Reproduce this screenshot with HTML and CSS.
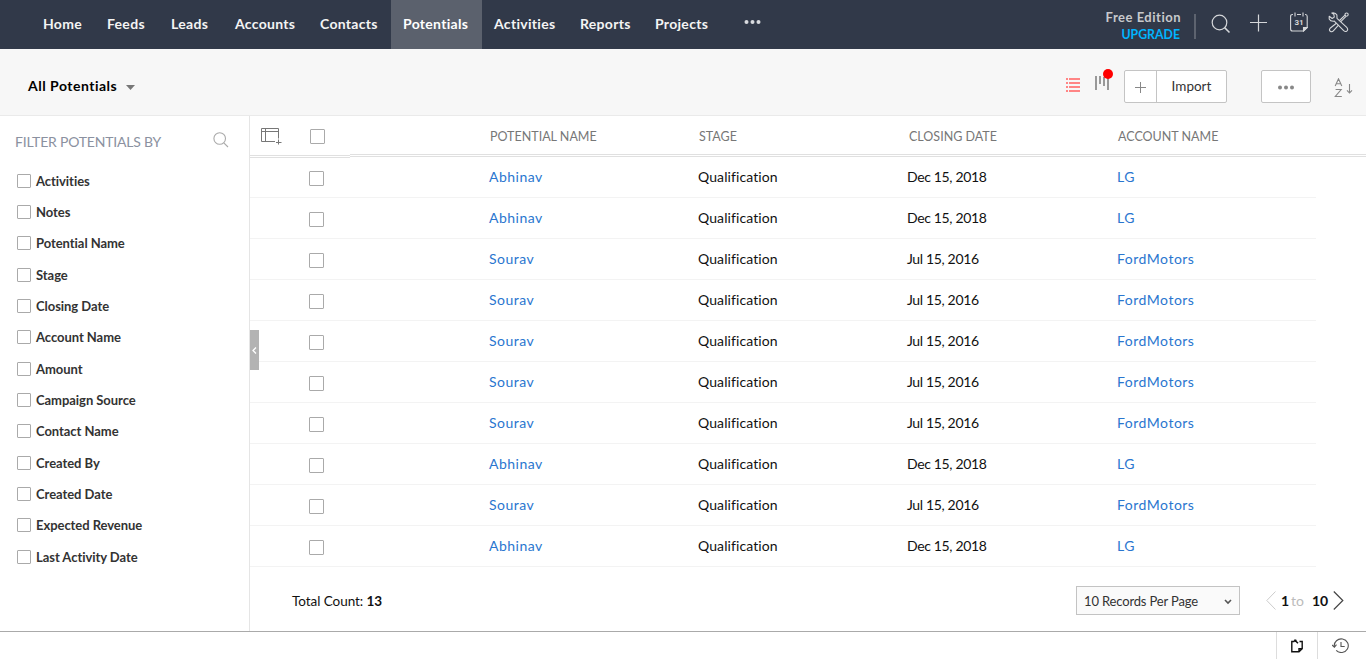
FILE: index.html
```html
<!DOCTYPE html>
<html lang="en">
<head>
<meta charset="utf-8">
<title>All Potentials</title>
<link rel="stylesheet" href="styles.css">
</head>
<body>
<header class="topbar">
  <nav class="nav">
    <a>Home</a><a>Feeds</a><a>Leads</a><a>Accounts</a><a>Contacts</a><a class="active">Potentials</a><a>Activities</a><a>Reports</a><a>Projects</a>
    <a class="more"><svg width="18" height="6"><g fill="#d9dbdf"><circle cx="3.5" cy="3" r="2"/><circle cx="9.5" cy="3" r="2"/><circle cx="15.5" cy="3" r="2"/></g></svg></a>
  </nav>
  <div class="edition"><span class="free">Free Edition</span><span class="upgrade">UPGRADE</span></div>
  <div class="tools">
    <svg width="20" height="20" fill="none" stroke="#d5d7da" stroke-width="1.2"><circle cx="8.5" cy="8.5" r="7.3"/><path d="M13.6 13.6L18.5 18.5" stroke-width="1.5"/></svg>
    <svg width="18" height="18" stroke="#d5d7da" stroke-width="1.2"><path d="M8.5 0.5V17.5M0 8.5H17"/></svg>
    <svg width="18" height="20" fill="none" stroke="#d5d7da" stroke-width="1.1"><path d="M3 2.5H2.5Q.6 2.5 .6 4.5V17Q.6 19 2.5 19H13.5L17.2 15.5V4.5Q17.2 2.5 15.5 2.5H15M7 2.5H11M5 .5V4.5M13 .5V4.5"/><path d="M13.5 19V15.5H17.2Z" fill="#d5d7da"/><text x="9" y="13" text-anchor="middle" class="cal">31</text></svg>
    <svg width="22" height="21" fill="none" stroke="#d5d7da" stroke-width="1.1" stroke-linejoin="round"><path d="M1.2 4.3L4.2 6.5L6.3 5.1L5.8 2.2L3.8 1Q7.5.3 8.9 3.1L9 6.3L19 15.7Q20.5 18 18.6 19.2Q17.2 19.9 15.7 18.6L6.3 9.1Q2.5 9.6 1.2 6.9Z"/><path d="M11.5 8.5L17 3.2M12.8 9.6L18 4.3M8.4 11.2L2.1 16.3Q.7 18 2.3 19.3Q4 20.4 5.3 18.9L10.5 13.2"/><circle cx="18.6" cy="2.6" r="1.6"/></svg>
  </div>
</header>

<section class="toolbar">
  <div class="view">All Potentials<svg width="9" height="5"><path d="M0 0H9L4.5 5Z" fill="#777"/></svg></div>
  <div class="actions">
    <svg class="list" width="14" height="14" stroke="#ff8585" stroke-width="2"><path d="M0 1H2M3 1H14M0 5H2M3 5H14M0 9H2M3 9H14M0 13H2M3 13H14"/></svg>
    <svg class="kanban" width="20" height="23"><path d="M2 7V21M6 7V15M10 8V17M14 8V21" stroke="#999" stroke-width="2"/><circle cx="14" cy="5" r="5" fill="#f00"/></svg>
    <div class="split"><span class="plus"><svg width="11" height="11" stroke="#888"><path d="M5.5 0V11M0 5.5H11"/></svg></span><span class="import">Import</span></div>
    <div class="dots"><svg width="16" height="5" fill="#888"><circle cx="2" cy="2.5" r="2"/><circle cx="8" cy="2.5" r="2"/><circle cx="14" cy="2.5" r="2"/></svg></div>
    <svg class="sort" width="20" height="20" fill="none" stroke="#888" stroke-width="1.1"><path d="M1.2 8L4.5 .8L7.8 8M2.3 5.8H6.7M1.6 11.5H7.2L1.3 18.5H7.8M15.5 6V15M13 12.3L15.5 15L18 12.3"/></svg>
  </div>
</section>

<main class="main">
  <aside class="filters">
    <div class="filter-title"><span>FILTER POTENTIALS BY</span><svg width="16" height="16" fill="none" stroke="#aaa" stroke-width="1.1"><circle cx="6.7" cy="6.5" r="5.8"/><path d="M10.8 10.8L15 15"/></svg></div>
    <ul class="filter-list">
      <li><i class="box"></i><span>Activities</span></li>
      <li><i class="box"></i><span>Notes</span></li>
      <li><i class="box"></i><span>Potential Name</span></li>
      <li><i class="box"></i><span>Stage</span></li>
      <li><i class="box"></i><span>Closing Date</span></li>
      <li><i class="box"></i><span>Account Name</span></li>
      <li><i class="box"></i><span>Amount</span></li>
      <li><i class="box"></i><span>Campaign Source</span></li>
      <li><i class="box"></i><span>Contact Name</span></li>
      <li><i class="box"></i><span>Created By</span></li>
      <li><i class="box"></i><span>Created Date</span></li>
      <li><i class="box"></i><span>Expected Revenue</span></li>
      <li><i class="box"></i><span>Last Activity Date</span></li>
    </ul>
  </aside>
  <section class="records">
    <div class="collapse"><svg width="5" height="7" fill="none" stroke="#fff" stroke-width="1.3"><path d="M4 .5L1 3.5L4 6.5"/></svg></div>
    <div class="head">
      <svg class="columns" width="21" height="17" fill="none" stroke="#777"><path d="M14 13.5H.5V.5H17.5V10.5M.5 3.5H17.5M4.5 .5V13.5M17.5 11.5V16.5M15 14.5H20.5"/></svg>
      <i class="box"></i><span>POTENTIAL NAME</span><span>STAGE</span><span>CLOSING DATE</span><span>ACCOUNT NAME</span>
    </div>
    <div class="rows">
      <div class="row"><i class="box"></i><a>Abhinav</a><span class="stage">Qualification</span><span class="date">Dec 15, 2018</span><a>LG</a></div>
      <div class="row"><i class="box"></i><a>Abhinav</a><span class="stage">Qualification</span><span class="date">Dec 15, 2018</span><a>LG</a></div>
      <div class="row"><i class="box"></i><a>Sourav</a><span class="stage">Qualification</span><span class="date">Jul 15, 2016</span><a>FordMotors</a></div>
      <div class="row"><i class="box"></i><a>Sourav</a><span class="stage">Qualification</span><span class="date">Jul 15, 2016</span><a>FordMotors</a></div>
      <div class="row"><i class="box"></i><a>Sourav</a><span class="stage">Qualification</span><span class="date">Jul 15, 2016</span><a>FordMotors</a></div>
      <div class="row"><i class="box"></i><a>Sourav</a><span class="stage">Qualification</span><span class="date">Jul 15, 2016</span><a>FordMotors</a></div>
      <div class="row"><i class="box"></i><a>Sourav</a><span class="stage">Qualification</span><span class="date">Jul 15, 2016</span><a>FordMotors</a></div>
      <div class="row"><i class="box"></i><a>Abhinav</a><span class="stage">Qualification</span><span class="date">Dec 15, 2018</span><a>LG</a></div>
      <div class="row"><i class="box"></i><a>Sourav</a><span class="stage">Qualification</span><span class="date">Jul 15, 2016</span><a>FordMotors</a></div>
      <div class="row"><i class="box"></i><a>Abhinav</a><span class="stage">Qualification</span><span class="date">Dec 15, 2018</span><a>LG</a></div>
    </div>
    <div class="pager">
      <div class="total">Total Count: <b>13</b></div>
      <div class="select"><span>10 Records Per Page</span><svg width="8" height="6" fill="none" stroke="#555" stroke-width="1.6"><path d="M1 1L4 4L7 1"/></svg></div>
      <div class="range">
        <svg width="10" height="19" fill="none" stroke="#ccc"><path d="M9.5 .5L.8 9.5L9.5 18.5"/></svg>
        <b class="from">1</b><span class="to">to</span><b class="until">10</b>
        <svg width="11" height="19" fill="none" stroke="#444" stroke-width="1.2"><path d="M.8 .5L9.8 9.5L.8 18.5"/></svg>
      </div>
    </div>
  </section>
</main>

<footer class="bottom">
  <div class="note"><svg width="12" height="14" fill="none" stroke="#111" stroke-width="1.4"><path d="M3 2.5H.8V12.8H8L11.2 9.8V2.5H8.5M8 12.8V9.8H11.2"/><path d="M3.3 .7L7 4.3M3.2 2.6L5.4 .8" stroke-width="1.6"/></svg></div>
  <div class="history"><svg width="17" height="15" fill="none" stroke="#555" stroke-width="1.1"><path d="M2.3 8.5A7 6.8 0 1 1 4.2 12.4M0 7L2.4 9.2L4.5 6.7M9 4V8.5H12.7"/></svg></div>
</footer>
</body>
</html>
```
FILE: styles.css
```css
* { box-sizing: border-box; }
body { margin: 0; width: 1366px; height: 659px; overflow: hidden; display: flex; flex-direction: column; background: #fff; color: #111; font: 14px/20px Lato, "Open Sans", sans-serif; font-variant-ligatures: none; }
svg { display: block; flex: none; }
ul { list-style: none; margin: 0; padding: 0; }
.box { display: block; flex: none; border: 1px solid #aaa; border-radius: 1px; background: #fff; }

.topbar { height: 49px; flex: none; background: #313949; display: flex; padding-left: 31px; }
.nav { display: grid; grid-template-columns: 64px 64px 64px 85px 83px 91px 86px 75px 78px 62px; color: #f4f4f4; font-weight: 700; letter-spacing: .3px; }
.nav a { display: flex; padding: 14px 0 0 12px; white-space: nowrap; }
.nav .active { background: #5b616d; color: #fff; }
.nav .more { padding: 19px 0 0 22px; }
.edition { margin-left: auto; width: 91px; margin-top: 8px; padding-right: 13px; display: flex; flex-direction: column; align-items: flex-end; line-height: 18px; font-size: 13px; font-weight: 700; white-space: nowrap; }
.free { color: #c8c9cc; letter-spacing: .5px; }
.upgrade { color: #00b4ff; font-size: 12.3px; padding-right: 1px; }
.tools { width: 172px; height: 25px; margin-top: 14px; border-left: 2px solid #5d636f; display: grid; grid-template-columns: 39px 40px 38px 22px; padding-left: 15px; }
.tools svg:nth-child(3), .tools svg:nth-child(4) { margin-top: -2px; }
.cal { font: 700 8px Roboto, sans-serif; fill: #d5d7da; stroke: none; }

.toolbar { height: 67px; flex: none; background: #f7f7f7; border-bottom: 1px solid #eaeaea; display: flex; justify-content: space-between; padding-top: 21px; }
.view { margin-left: 18px; height: 32px; padding-left: 10px; display: flex; align-items: center; gap: 9px; color: #000; font-weight: 700; letter-spacing: .5px; }
.view svg { margin-top: 2px; }
.actions { display: flex; width: 301px; }
.list { margin: 8px 14px 0 1px; }
.kanban { margin: -1px 10px 0 0; }
.split { width: 103px; height: 33px; display: flex; border: 1px solid #c4c4c4; border-radius: 2px; background: #fff; margin-right: 34px; }
.plus { width: 32px; border-right: 1px solid #c4c4c4; display: grid; place-items: center; padding-top: 1px; }
.import { flex: 1; text-align: center; line-height: 30px; font-size: 13.5px; color: #333; }
.dots { width: 50px; height: 33px; border: 1px solid #c4c4c4; border-radius: 2px; background: #fff; display: grid; place-items: center; padding-top: 2px; }
.sort { margin: 8px 0 0 23px; }

.main { flex: 1; min-height: 0; display: flex; }
.filters { width: 250px; border-right: 1px solid #e5e5e5; }
.filter-title { height: 49px; display: flex; justify-content: space-between; padding: 16px 20px 0 15px; color: #8b91a0; letter-spacing: -.2px; }
.filter-list { display: grid; grid-auto-rows: 31.33px; padding-left: 17px; color: #333; font-size: 13px; font-weight: 700; letter-spacing: -.05px; }
.filter-list li { display: flex; align-items: center; gap: 5px; }
.filter-list .box { width: 14px; height: 14px; }
.records { flex: 1; position: relative; display: flex; flex-direction: column; }
.collapse { position: absolute; left: 0; top: 214px; width: 9px; height: 40px; background: #b3b3b3; display: grid; place-items: center; }
.head { height: 41px; flex: none; position: relative; display: grid; grid-template-columns: 49px 180px 209px 210px 209px 1fr; padding-left: 11px; border-bottom: 3px double #e0e0e0; color: #777; font-size: 12.5px; line-height: 41px; }
.head::after { content: ""; position: absolute; left: 0; bottom: -4px; width: 100px; height: 4px; background: #fff; border-bottom: 3px double #e0e0e0; }
.head .columns { margin-top: 12px; }
.head .box { width: 15px; height: 15px; margin-top: 13px; }
.rows { width: 1066px; display: grid; grid-auto-rows: 41.05px; }
.row { display: grid; grid-template-columns: 180px 209px 209px 210px 1fr; align-items: center; padding-left: 59px; border-bottom: 1px solid #f3f3f3; color: #111; }
.row .box { width: 15px; height: 15px; margin-top: 2px; }
.row a { color: #2a76cf; letter-spacing: .5px; }
.stage { letter-spacing: .1px; }
.date { letter-spacing: -.35px; }
.pager { height: 63px; display: flex; align-items: center; padding-top: 4px; }
.total { margin-left: 42px; width: 784px; font-size: 13.5px; letter-spacing: -.05px; }
.select { width: 164px; height: 29px; border: 1px solid #c3c3c3; background: #fafafa; display: flex; align-items: center; justify-content: space-between; padding: 0 7px; color: #333; font-size: 13px; letter-spacing: -.15px; }
.select svg { margin-top: 3px; }
.range { margin-left: 26px; display: flex; align-items: center; color: #111; }
.from { margin-left: 5px; width: 10px; }
.to { width: 21px; color: #bbb; }
.until { width: 21px; }
.bottom { height: 28px; flex: none; border-top: 1px solid #aaa; display: flex; justify-content: flex-end; }
.note { width: 41px; border-left: 1px solid #ddd; display: grid; place-items: center; }
.history { width: 49px; border-left: 1px solid #ddd; display: grid; place-items: center; padding-right: 3px; }
```
